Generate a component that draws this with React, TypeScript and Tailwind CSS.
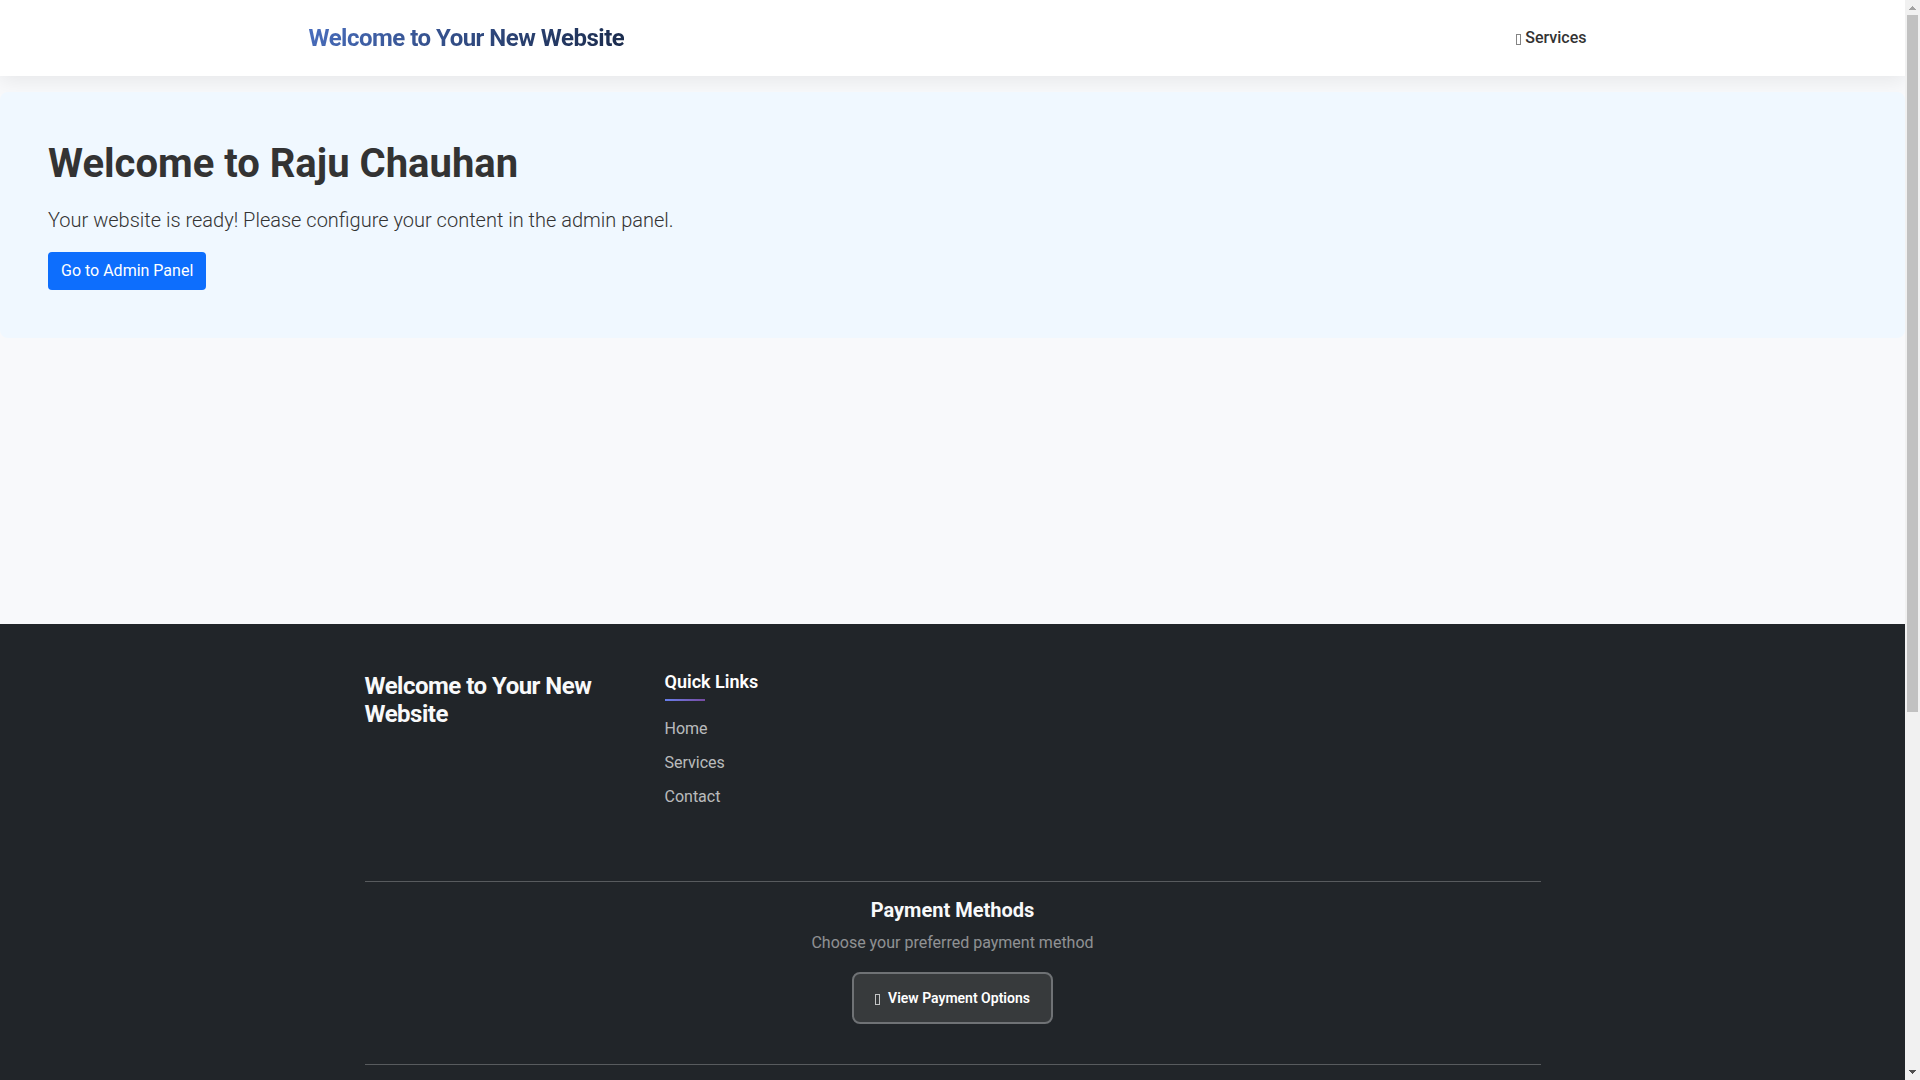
const quickLinks = [
  { label: "Home", href: "#home" },
  { label: "Services", href: "#services" },
  { label: "Contact", href: "#contact" },
];

const GlyphBox = ({ className }: { className: string }) => (
  <svg
    width="5"
    height="11"
    viewBox="0 0 5 11"
    fill="none"
    stroke="currentColor"
    shapeRendering="crispEdges"
    aria-hidden="true"
    className={className}
  >
    <rect x="0.5" y="0.5" width="4" height="10" />
  </svg>
);

const Header = () => (
  <header className="bg-white shadow-[0_4px_20px_rgba(0,0,0,0.08)]">
    <div className="mx-auto flex h-19 max-w-[1320px] items-center justify-between px-4">
      <a
        href="#home"
        className="bg-linear-135 from-[#4a6fc0] to-[#1a2a4a] bg-clip-text text-2xl font-bold tracking-[-0.5px] text-transparent"
      >
        Welcome to Your New Website
      </a>
      <nav className="px-[10px]">
        <a
          href="#services"
          className="flex items-center gap-1 font-medium text-[#333333]"
        >
          <GlyphBox className="mt-[3px] opacity-60" />
          Services
        </a>
      </nav>
    </div>
  </header>
);

const Hero = () => (
  <section className="relative mt-4 rounded-lg bg-[#f0f8ff] p-12">
    <h1 className="mb-4 text-[40px] leading-12 font-bold text-[#333333]">
      Welcome to Raju Chauhan
    </h1>
    <p className="mb-4 text-xl leading-8 font-light text-[#333333]">
      Your website is ready! Please configure your content in the admin panel.
    </p>
    <a
      href="#admin"
      className="inline-block rounded-sm bg-[#0d6efd] px-[13px] py-[7px] align-top text-white"
    >
      Go to Admin Panel
    </a>
  </section>
);

const Footer = () => (
  <footer className="bg-[#212529] py-12 text-[#f8f9fa]">
    <div className="mx-auto max-w-[1200px] px-3">
      <div className="grid grid-cols-4 gap-6">
        <h2 className="text-2xl leading-7 font-bold tracking-[-0.5px]">
          Welcome to Your New Website
        </h2>
        <div>
          <h3 className="text-lg leading-5 font-semibold text-white">
            Quick Links
          </h3>
          <div className="mt-[7px] h-0.5 w-10 bg-linear-90 from-[#667eea] to-[#764ba2]" />
          <ul className="mt-4 space-y-[10px] text-white/70">
            {quickLinks.map((link) => (
              <li key={link.label}>
                <a href={link.href}>{link.label}</a>
              </li>
            ))}
          </ul>
        </div>
      </div>
      <div className="mt-[72px] border-y border-[#585b5e] pt-4 pb-10 text-center">
        <h3 className="text-xl leading-6 font-bold">Payment Methods</h3>
        <p className="mt-[9px] mb-[17px] text-white/50">
          Choose your preferred payment method
        </p>
        <button
          type="button"
          className="inline-flex h-[52px] items-center gap-2 rounded-lg border-2 border-[#6f7275] bg-[#373a3c] px-[21px] align-top text-sm font-semibold text-white"
        >
          <GlyphBox className="mt-[3px] opacity-70" />
          View Payment Options
        </button>
      </div>
    </div>
  </footer>
);

const ScrollBar = () => (
  <div
    className="flex w-[15px] shrink-0 flex-col items-center bg-[#f1f1f1]"
    aria-hidden="true"
  >
    <svg width="15" height="15" viewBox="0 0 15 15" className="shrink-0">
      <path d="M7 6h1v1h1v1h1v1h1v1H4V9h1V8h1V7h1z" fill="#a3a3a3" />
    </svg>
    <div className="min-h-0 w-full flex-1 px-0.5">
      <div className="h-[66.4%] bg-[#c1c1c1]" />
    </div>
    <svg width="15" height="15" viewBox="0 0 15 15" className="shrink-0">
      <path d="M4 5h7v1h-1v1H9v1H8v1H7V8H6V7H5V6H4z" fill="#505050" />
    </svg>
  </div>
);

export default function App() {
  return (
    <div className="flex h-screen bg-[#f8f9fb] font-['Roboto',sans-serif] text-base">
      <div className="min-w-0 flex-1 overflow-hidden">
        <Header />
        <main className="min-h-[548px] flow-root">
          <Hero />
        </main>
        <Footer />
      </div>
      <ScrollBar />
    </div>
  );
}
